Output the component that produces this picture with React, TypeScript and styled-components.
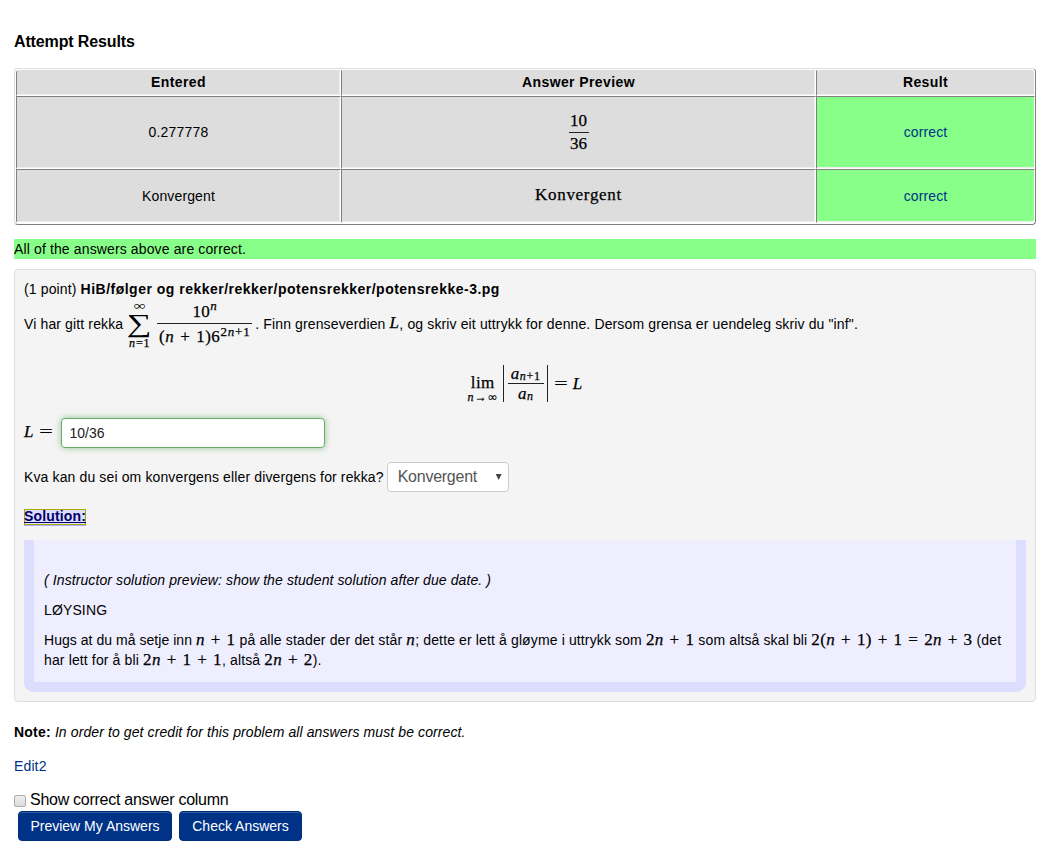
import React from 'react';
import styled, { createGlobalStyle } from 'styled-components';

const Global = createGlobalStyle`
  * { box-sizing: border-box; }
  html, body { margin: 0; padding: 0; background: #fff; }
  body { font: 14px/20px "Liberation Sans", Arial, sans-serif; color: #000; }
`;

const T = styled.span<{ $ls?: number; $size?: number }>`
  font-size: ${(p) => p.$size ?? 14}px;
  letter-spacing: ${(p) => p.$ls ?? 0.13}px;
  white-space: pre;
`;
const Strong = styled(T).attrs((p) => ({ $ls: p.$ls ?? 0.4 }))`font-weight: bold;`;
const Em = styled(T).attrs((p) => ({ $ls: p.$ls ?? 0.1 }))`font-style: italic;`;
const Link = styled(T)`color: #003388;`;

const Page = styled.main`
  width: 1055px;
  height: 845px;
  padding: 32px 19px 0 14px;
  overflow: hidden;
`;
const Heading = styled.h3`
  margin: 0 0 16px;
  font-size: 16px;
  line-height: 20px;
  letter-spacing: -0.13px;
`;

const Results = styled.div`
  display: grid;
  grid-template-columns: 325px 475px 219px;
  grid-template-rows: 26px 73px 54px;
  height: 157px;
  padding: 1px 0 1px 1px;
  border: 1px solid;
  border-color: #ddd #808080 #808080 #ddd;
  border-radius: 4px;
`;
const Cell = styled.div<{ $head?: boolean; $ok?: boolean; $lift?: number }>`
  display: flex;
  align-items: center;
  justify-content: center;
  padding-bottom: ${(p) => p.$lift ?? 0}px;
  background: ${(p) => (p.$ok ? '#8f8' : '#ddd')};
  border: 1px solid;
  border-color: ${(p) => (p.$head ? '#ddd' : '#808080')} #fff #fff #808080;
  box-shadow: inset -1px -1px 0 #eee;
  &:first-child { border-top-left-radius: 3px; }
  &:nth-child(3) { border-top-right-radius: 3px; }
  &:nth-child(7) { border-bottom-left-radius: 3px; }
  &:nth-child(3n) { box-shadow: inset 0 -1px 0 #eee; }
  &:last-child { border-bottom-right-radius: 3px; }
`;

const Banner = styled.div`
  height: 20px;
  margin-top: 14px;
  background: #8f8;
`;

const Problem = styled.section`
  height: 433px;
  margin-top: 10px;
  padding: 9px;
  background: #f4f4f4;
  border: 1px solid #dfdfdf;
  border-radius: 4px;
`;
const Row = styled.div<{ $h: number; $center?: boolean; $top?: number }>`
  display: flex;
  align-items: center;
  justify-content: ${(p) => (p.$center ? 'center' : 'flex-start')};
  height: ${(p) => p.$h}px;
  margin-top: ${(p) => p.$top ?? 0}px;
`;

const M = styled.span<{ $ls?: number; $size?: number; $lift?: number; $drop?: number }>`
  font-family: "Liberation Serif", serif;
  font-size: ${(p) => p.$size ?? 17}px;
  line-height: 1;
  letter-spacing: ${(p) => p.$ls ?? 0.4}px;
  word-spacing: 1.2px;
  padding-bottom: ${(p) => p.$lift ?? 0}px;
  padding-top: ${(p) => p.$drop ?? 0}px;
  -webkit-text-stroke: 0.25px #000;
  white-space: pre;
  i { font-style: italic; }
`;
const Frac = styled.span<{ $w: number; $mx?: string }>`
  display: inline-flex;
  flex-direction: column;
  align-items: center;
  width: ${(p) => p.$w}px;
  margin: ${(p) => p.$mx ?? '0'};
`;
const Bar = styled.span`
  width: 100%;
  height: 1px;
  background: #222;
`;
const Part = styled.span<{ $h: number }>`
  display: flex;
  align-items: center;
  height: ${(p) => p.$h}px;
`;
const Sup = styled(M)`align-self: flex-start;`;
const Limits = styled.span<{ $w: number; $drop?: number; $right?: number }>`
  display: inline-flex;
  flex-direction: column;
  align-items: center;
  width: ${(p) => p.$w}px;
  margin-right: ${(p) => p.$right ?? 0}px;
  padding-top: ${(p) => p.$drop ?? 0}px;
`;
const Wide = styled(M)<{ $stretch: number }>`
  display: inline-block;
  transform: scaleX(${(p) => p.$stretch});
  -webkit-text-stroke: 0;
`;
const Rule = styled.span`
  width: 1px;
  height: 37px;
  background: #222;
`;
const Equals = styled(M)`
  width: 12px;
  margin: 0 6px 0 7px;
  text-align: center;
  transform: scaleX(1.4);
`;

const Answer = styled.input`
  width: 264px;
  height: 30px;
  margin-left: 3px;
  padding: 4px 7px;
  border: 1px solid #66b066;
  border-radius: 4px;
  background: #fff;
  box-shadow: 0 0 6px rgba(81, 163, 81, 0.6);
  font: 14px "Liberation Sans", Arial, sans-serif;
  color: #222;
`;
const Select = styled.div`
  display: flex;
  align-items: center;
  justify-content: space-between;
  width: 122px;
  height: 30px;
  margin-left: 3px;
  padding: 0 6px 0 10px;
  border: 1px solid #ccc;
  border-radius: 4px;
  background: #fff;
  color: #555;
`;
const Caret = styled.span`
  width: 6px;
  height: 6px;
  background: #444;
  clip-path: polygon(0 0, 100% 0, 50% 100%);
`;

const SolutionLink = styled.a`
  display: inline-block;
  height: 17px;
  background: #ddf;
  border-bottom: 1px solid #aaf;
  box-shadow: inset 0 0 0 1px #aa0;
  color: #006;
  line-height: 15px;
  text-decoration: underline;
`;
const Solution = styled.div`
  height: 152px;
  margin-top: 13px;
  padding: 30px 10px 0;
  background: #eef;
  border: solid #ddf;
  border-width: 0 10px 10px;
  border-radius: 0 0 10px 10px;
`;
const Para = styled.p`
  margin: 0 0 10px;
  height: 20px;
  line-height: 20px;
  white-space: nowrap;
`;

const Options = styled.label`
  display: flex;
  align-items: center;
  height: 20px;
  margin-top: 14px;
`;
const Check = styled.span`
  width: 12px;
  height: 12px;
  margin: 2px 4px 0 0;
  border: 1px solid #aaa;
  border-radius: 2px;
  background: linear-gradient(#eee, #ddd);
`;
const Buttons = styled.div`
  display: flex;
  gap: 7px;
  margin: 1px 0 0 4px;
`;
const Button = styled.button<{ $w: number }>`
  width: ${(p) => p.$w}px;
  height: 30px;
  padding: 0;
  border: 1px solid #002b78;
  border-radius: 4px;
  background: #003388;
  box-shadow: inset 0 1px 0 rgba(255, 255, 255, 0.2);
  color: #fff;
  font: 14px "Liberation Sans", Arial, sans-serif;
`;

export default function App() {
  return (
    <Page>
      <Global />
      <Heading>Attempt Results</Heading>
      <Results>
        <Cell $head $lift={2}><Strong>Entered</Strong></Cell>
        <Cell $head $lift={2}><Strong>Answer Preview</Strong></Cell>
        <Cell $head $lift={2}><Strong>Result</Strong></Cell>
        <Cell $lift={1}><T $ls={0.2}>0.277778</T></Cell>
        <Cell $lift={1}>
          <Frac $w={20}>
            <Part $h={22}><M $ls={0}>10</M></Part><Bar /><Part $h={22}><M $ls={0}>36</M></Part>
          </Frac>
        </Cell>
        <Cell $ok $lift={1}><Link>correct</Link></Cell>
        <Cell><T>Konvergent</T></Cell>
        <Cell $lift={4}><M $ls={0.7}>Konvergent</M></Cell>
        <Cell $ok><Link>correct</Link></Cell>
      </Results>
      <Banner><T>All of the answers above are correct.</T></Banner>
      <Problem>
        <Row $h={20}>
          <T>(1 point) </T>
          <Strong $ls={0.49}>HiB/følger og rekker/rekker/potensrekker/potensrekke-3.pg</Strong>
        </Row>
        <Row $h={50}>
          <T>Vi har gitt rekka </T>
          <Limits $w={25}>
            <Part $h={12}><Wide $size={13} $ls={0} $stretch={1.3}>∞</Wide></Part>
            <Part $h={26}><Wide $size={26} $ls={0} $stretch={1.34}>∑</Wide></Part>
            <Part $h={12}><M $size={12} $ls={0.9}><i>n</i>=1</M></Part>
          </Limits>
          <Frac $w={95} $mx="0 3px 0 5px">
            <Part $h={24}><M>10</M><Sup $size={13}><i>n</i></Sup></Part>
            <Bar />
            <Part $h={25}><M $ls={0.5}>(<i>n</i> + 1)6</M><Sup $size={13} $ls={0.8} $drop={1}>2<i>n</i>+1</Sup></Part>
          </Frac>
          <T>. Finn grenseverdien </T>
          <M $lift={3}><i>L</i></M>
          <T>, og skriv eit uttrykk for denne. Dersom grensa er uendeleg skriv du "inf".</T>
        </Row>
        <Row $h={69} $center>
          <Limits $w={32} $drop={9} $right={4}>
            <M>lim</M>
            <M $size={12} $ls={1.3}><i>n</i>→∞</M>
          </Limits>
          <Rule />
          <Frac $w={36} $mx="0 3px 0 4px">
            <Part $h={19}><M><i>a</i></M><M $size={12} $drop={5} $ls={0.8}><i>n</i>+1</M></Part>
            <Bar />
            <Part $h={20}><M><i>a</i></M><M $size={12} $drop={5}><i>n</i></M></Part>
          </Frac>
          <Rule />
          <Equals $ls={0} $lift={1}>=</Equals>
          <M $ls={1} $lift={1}><i>L</i></M>
        </Row>
        <Row $h={30}>
          <M $ls={0} $lift={3}><i>L</i></M>
          <Equals $ls={0} $lift={3}>=</Equals>
          <Answer defaultValue="10/36" />
        </Row>
        <Row $h={58}>
          <T>Kva kan du sei om konvergens eller divergens for rekka?</T>
          <Select><T $size={16} $ls={-0.25}>Konvergent</T><Caret /></Select>
        </Row>
        <Row $h={20} $top={1}><SolutionLink><Strong $ls={0.15}>Solution:</Strong></SolutionLink></Row>
        <Solution>
          <Para><Em>( Instructor solution preview: show the student solution after due date. )</Em></Para>
          <Para><T>LØYSING</T></Para>
          <Para>
            <T $ls={0.04}>Hugs at du må setje inn </T><M><i>n</i> + 1</M><T $ls={0.15}> på alle stader der det står </T><M><i>n</i></M>
            <T>; dette er lett å gløyme i uttrykk som </T><M>2<i>n</i> + 1</M><T> som altså skal bli </T>
            <M>2(<i>n</i> + 1) + 1 = 2<i>n</i> + 3</M><T> (det</T>
            <br />
            <T>har lett for å bli </T><M>2<i>n</i> + 1 + 1</M><T>, altså </T><M>2<i>n</i> + 2</M><T>).</T>
          </Para>
        </Solution>
      </Problem>
      <Row $h={20} $top={20}>
        <Strong $ls={0.2}>Note: </Strong>
        <Em $ls={0.1}>In order to get credit for this problem all answers must be correct.</Em>
      </Row>
      <Row $h={20} $top={14}><Link>Edit2</Link></Row>
      <Options><Check /><T $size={16} $ls={-0.27}>Show correct answer column</T></Options>
      <Buttons>
        <Button $w={154}>Preview My Answers</Button>
        <Button $w={123}>Check Answers</Button>
      </Buttons>
    </Page>
  );
}
